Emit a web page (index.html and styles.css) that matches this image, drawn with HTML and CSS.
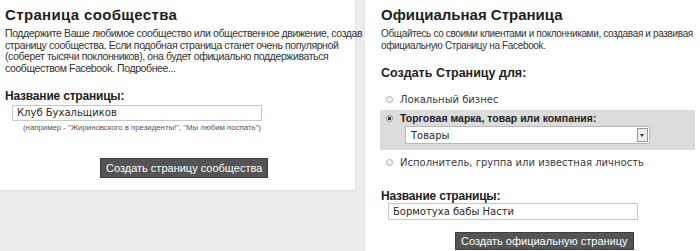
FILE: index.html
```html
<!DOCTYPE html>
<html lang="ru">
<head>
    <meta charset="UTF-8">
    <title>Создать страницу</title>
    <link rel="stylesheet" href="styles.css">
</head>
<body>
    <div class="page">
        <div class="panel panel-left">
            <h1>Страница сообщества</h1>
            <p class="intro">Поддержите Ваше любимое сообщество или общественное движение, создав<br>страницу сообщества. Если подобная страница станет очень популярной<br>(соберет тысячи поклонников), она будет официально поддерживаться<br>сообществом Facebook. Подробнее...</p>
            <div class="field">
                <label class="field-label">Название страницы:</label>
                <div class="text-input">Клуб Бухальщиков</div>
                <div class="hint">(например - "Жириновского в президенты!", "Мы любим поспать")</div>
            </div>
            <div class="actions">
                <button class="btn">Создать страницу сообщества</button>
            </div>
        </div>

        <div class="panel panel-right">
            <h1>Официальная Страница</h1>
            <p class="intro">Общайтесь со своими клиентами и поклонниками, создавая и развивая<br>официальную Страницу на Facebook.</p>
            <h2>Создать Страницу для:</h2>
            <div class="options">
                <div class="option">
                    <span class="radio"></span>
                    <span>Локальный бизнес</span>
                </div>
                <div class="option option-selected">
                    <div class="option-row">
                        <span class="radio checked"></span>
                        <span class="option-title">Торговая марка, товар или компания:</span>
                    </div>
                    <div class="select">
                        <span>Товары</span>
                        <span class="select-arrow"></span>
                    </div>
                </div>
                <div class="option option-last">
                    <span class="radio"></span>
                    <span>Исполнитель, группа или известная личность</span>
                </div>
            </div>
            <div class="field">
                <label class="field-label">Название страницы:</label>
                <div class="text-input">Бормотуха бабы Насти</div>
            </div>
            <div class="actions">
                <button class="btn">Создать официальную страницу</button>
            </div>
        </div>
    </div>
</body>
</html>
```

FILE: styles.css
```css
body {
    margin: 0;
    background-color: #ececec;
    font-family: "DejaVu Sans", Verdana, sans-serif;
    color: #333;
    overflow: hidden;
}
.page {
    display: flex;
    align-items: flex-start;
    width: 700px;
    height: 251px;
    overflow: hidden;
}
.panel {
    background-color: white;
    box-sizing: border-box;
}
.panel-left {
    width: 355px;
    height: 190px;
    padding: 6px 0 0 5px;
    box-shadow: 0 1px 2px rgba(0,0,0,0.08);
}
.panel-right {
    flex: 1;
    height: 251px;
    margin-left: 9px;
    padding: 6px 0 0 16px;
    border-left: 1px solid #e4e4e4;
}
h1 {
    margin: 0;
    font-family: "Liberation Sans", Arial, sans-serif;
    font-size: 15px;
    font-weight: bold;
    color: #1e1e1e;
    line-height: 18px;
}
.panel-left h1 {
    letter-spacing: 0.35px;
}
.intro {
    margin: 4px 0 0;
    font-family: "Liberation Sans", Arial, sans-serif;
    font-size: 10.5px;
    line-height: 11.5px;
    letter-spacing: -0.4px;
    white-space: nowrap;
    color: #333;
}
.panel-right .intro {
    font-size: 10px;
    letter-spacing: -0.35px;
}
h2 {
    margin: 15px 0 0;
    font-family: "Liberation Sans", Arial, sans-serif;
    font-size: 12.5px;
    font-weight: bold;
    line-height: 15px;
    color: #1e1e1e;
}
.field {
    margin-top: 15px;
}
.field-label {
    display: block;
    font-family: "Liberation Sans", Arial, sans-serif;
    font-size: 12px;
    font-weight: bold;
    letter-spacing: -0.2px;
    color: #1e1e1e;
    line-height: 14px;
}
.text-input {
    width: 240px;
    height: 14px;
    margin: 2px 0 0 7px;
    padding: 0 4px;
    border: 1px solid #c8c8c8;
    font-size: 10px;
    line-height: 14px;
    color: #2a2a2a;
    box-sizing: content-box;
}
.hint {
    margin: 2px 0 0 18px;
    font-family: "Liberation Sans", Arial, sans-serif;
    font-size: 7.8px;
    line-height: 10px;
    color: #555;
}
.actions {
    margin-top: 24px;
    padding-left: 95px;
}
.btn {
    height: 20px;
    padding: 0 5px;
    background-color: #545454;
    color: white;
    border: 1px solid #3e3e3e;
    font-family: "Liberation Sans", Arial, sans-serif;
    font-size: 11px;
    line-height: 18px;
}
.panel-right .field {
    margin-top: 15px;
}
.panel-right .text-input {
    height: 15px;
    margin-top: 0;
    line-height: 15px;
}
.panel-right .actions {
    margin-top: 10px;
    padding-left: 74px;
}
.panel-right .btn {
    height: 18px;
    line-height: 16px;
}
.options {
    margin-top: 7px;
    width: 315px;
    margin-left: -1px;
    font-size: 10px;
    color: #3a3a3a;
}
.option {
    display: flex;
    align-items: center;
    gap: 7px;
    height: 22px;
    padding-left: 6px;
}
.option-last {
    height: 24px;
}
.option-selected {
    display: block;
    height: 40px;
    box-sizing: border-box;
    padding: 2px 0 0 6px;
    background-color: #dcdcdc;
}
.option-row {
    display: flex;
    align-items: center;
    gap: 7px;
    height: 12px;
}
.option-title {
    font-family: "Liberation Sans", Arial, sans-serif;
    font-size: 10.5px;
    font-weight: bold;
    color: #1e1e1e;
}
.radio {
    width: 5px;
    height: 5px;
    border: 1px solid #aaa;
    border-radius: 50%;
    background-color: #f4f4f4;
    flex-shrink: 0;
}
.radio.checked {
    background: radial-gradient(circle, #333 1.5px, #f4f4f4 2px);
    border-color: #888;
}
.select {
    display: flex;
    align-items: center;
    justify-content: space-between;
    width: 237px;
    height: 16px;
    margin: 2px 0 0 19px;
    padding: 0 1px 0 5px;
    background-color: white;
    border: 1px solid #b8b8b8;
    color: #2a2a2a;
}
.select-arrow {
    width: 9px;
    height: 12px;
    border: 1px solid #999;
    background-color: #eee;
    position: relative;
}
.select-arrow::after {
    content: "";
    position: absolute;
    left: 2px;
    top: 5px;
    border-left: 2.5px solid transparent;
    border-right: 2.5px solid transparent;
    border-top: 3px solid #333;
}
```
